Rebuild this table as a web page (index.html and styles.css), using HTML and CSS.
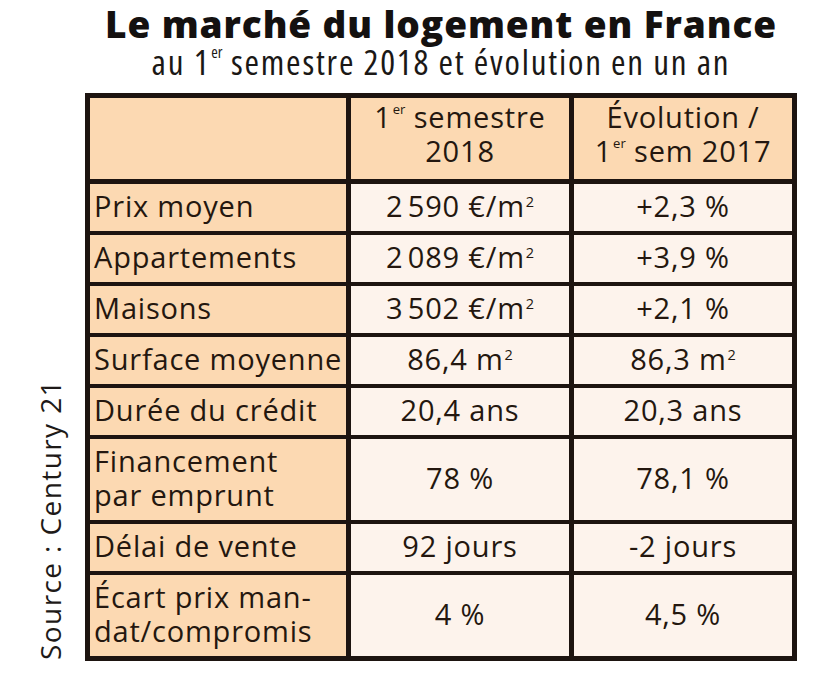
FILE: index.html
```html
<!DOCTYPE html>
<html lang="fr">
<head>
<meta charset="utf-8">
<title>Le marché du logement en France</title>
<link rel="stylesheet" href="styles.css">
</head>
<body>
<div class="page">
  <div class="source"><span class="source-text">Source : Century 21</span></div>
  <div class="main">
    <h1 class="title">Le marché du logement en France</h1>
    <p class="subtitle">au 1<sup class="ord">er</sup> semestre 2018 et évolution en un an</p>
    <table class="data">
      <thead>
        <tr>
          <th class="label"></th>
          <th class="val">1<sup class="ord">er</sup> semestre<br>2018</th>
          <th class="val">Évolution /<br>1<sup class="ord">er</sup> sem 2017</th>
        </tr>
      </thead>
      <tbody>
        <tr><td class="label">Prix moyen</td><td class="val">2&#8239;590 €/m<sup class="sq">2</sup></td><td class="val">+2,3 %</td></tr>
        <tr><td class="label">Appartements</td><td class="val">2&#8239;089 €/m<sup class="sq">2</sup></td><td class="val">+3,9 %</td></tr>
        <tr><td class="label">Maisons</td><td class="val">3&#8239;502 €/m<sup class="sq">2</sup></td><td class="val">+2,1 %</td></tr>
        <tr><td class="label">Surface moyenne</td><td class="val">86,4 m<sup class="sq">2</sup></td><td class="val">86,3 m<sup class="sq">2</sup></td></tr>
        <tr><td class="label">Durée du crédit</td><td class="val">20,4 ans</td><td class="val">20,3 ans</td></tr>
        <tr><td class="label">Financement<br>par emprunt</td><td class="val">78 %</td><td class="val">78,1 %</td></tr>
        <tr><td class="label">Délai de vente</td><td class="val">92 jours</td><td class="val">-2 jours</td></tr>
        <tr><td class="label">Écart prix man-<br>dat/compromis</td><td class="val">4 %</td><td class="val">4,5 %</td></tr>
      </tbody>
    </table>
  </div>
</div>
</body>
</html>
```

FILE: styles.css
```css
html, body {
  margin: 0;
  padding: 0;
  background: #ffffff;
}

body {
  font-family: "Open Sans", "DejaVu Sans", sans-serif;
  color: #24170f;
}

.page {
  display: flex;
  width: 815px;
}

.source {
  width: 85px;
  display: flex;
  justify-content: center;
  align-items: flex-end;
  padding-left: 14px;
  padding-bottom: 1px;
  box-sizing: border-box;
}

.source-text {
  writing-mode: vertical-rl;
  transform: rotate(180deg);
  font-size: 28px;
  line-height: 30px;
  letter-spacing: 1.4px;
  white-space: nowrap;
  color: #1e1a18;
}

.main {
  width: 712px;
  display: flex;
  flex-direction: column;
  align-items: center;
}

.title {
  margin: 2px 0 0;
  font-size: 37px;
  line-height: 44px;
  font-weight: 800;
  color: #141110;
  letter-spacing: 0.9px;
  white-space: nowrap;
}

.subtitle {
  margin: 0;
  font-size: 35px;
  line-height: 32px;
  font-stretch: 75%;
  letter-spacing: 1.8px;
  color: #1b1816;
  white-space: nowrap;
}

.ord {
  font-size: 0.45em;
  line-height: 0;
  vertical-align: 1.05em;
  letter-spacing: 0;
  margin-left: 1px;
}

.sq {
  font-size: 0.5em;
  line-height: 0;
  vertical-align: 0.7em;
  letter-spacing: 0;
  margin-left: 1px;
}

.data {
  margin-top: 15px;
  width: 712px;
  border-collapse: collapse;
  table-layout: fixed;
  border: 5px solid #1d1410;
}

.data th,
.data td {
  font-size: 29px;
  line-height: 34px;
  font-weight: 400;
  letter-spacing: 0.8px;
  padding: 5px 0 8px;
  border-left: 5px solid #1d1410;
  border-right: 5px solid #1d1410;
  border-top: 4px solid #1d1410;
  border-bottom: 4px solid #1d1410;
  vertical-align: middle;
  white-space: nowrap;
}

.data thead th {
  border-bottom-width: 5px;
  background: #fcd9b2;
  vertical-align: top;
  padding: 2px 0 11px;
}

.data th.label,
.data td.label {
  width: 252px;
  text-align: left;
  padding-left: 4px;
  background: #fcd9b2;
}

.data .val {
  text-align: center;
}

.data td.val {
  background: #fdf3ec;
}
```
